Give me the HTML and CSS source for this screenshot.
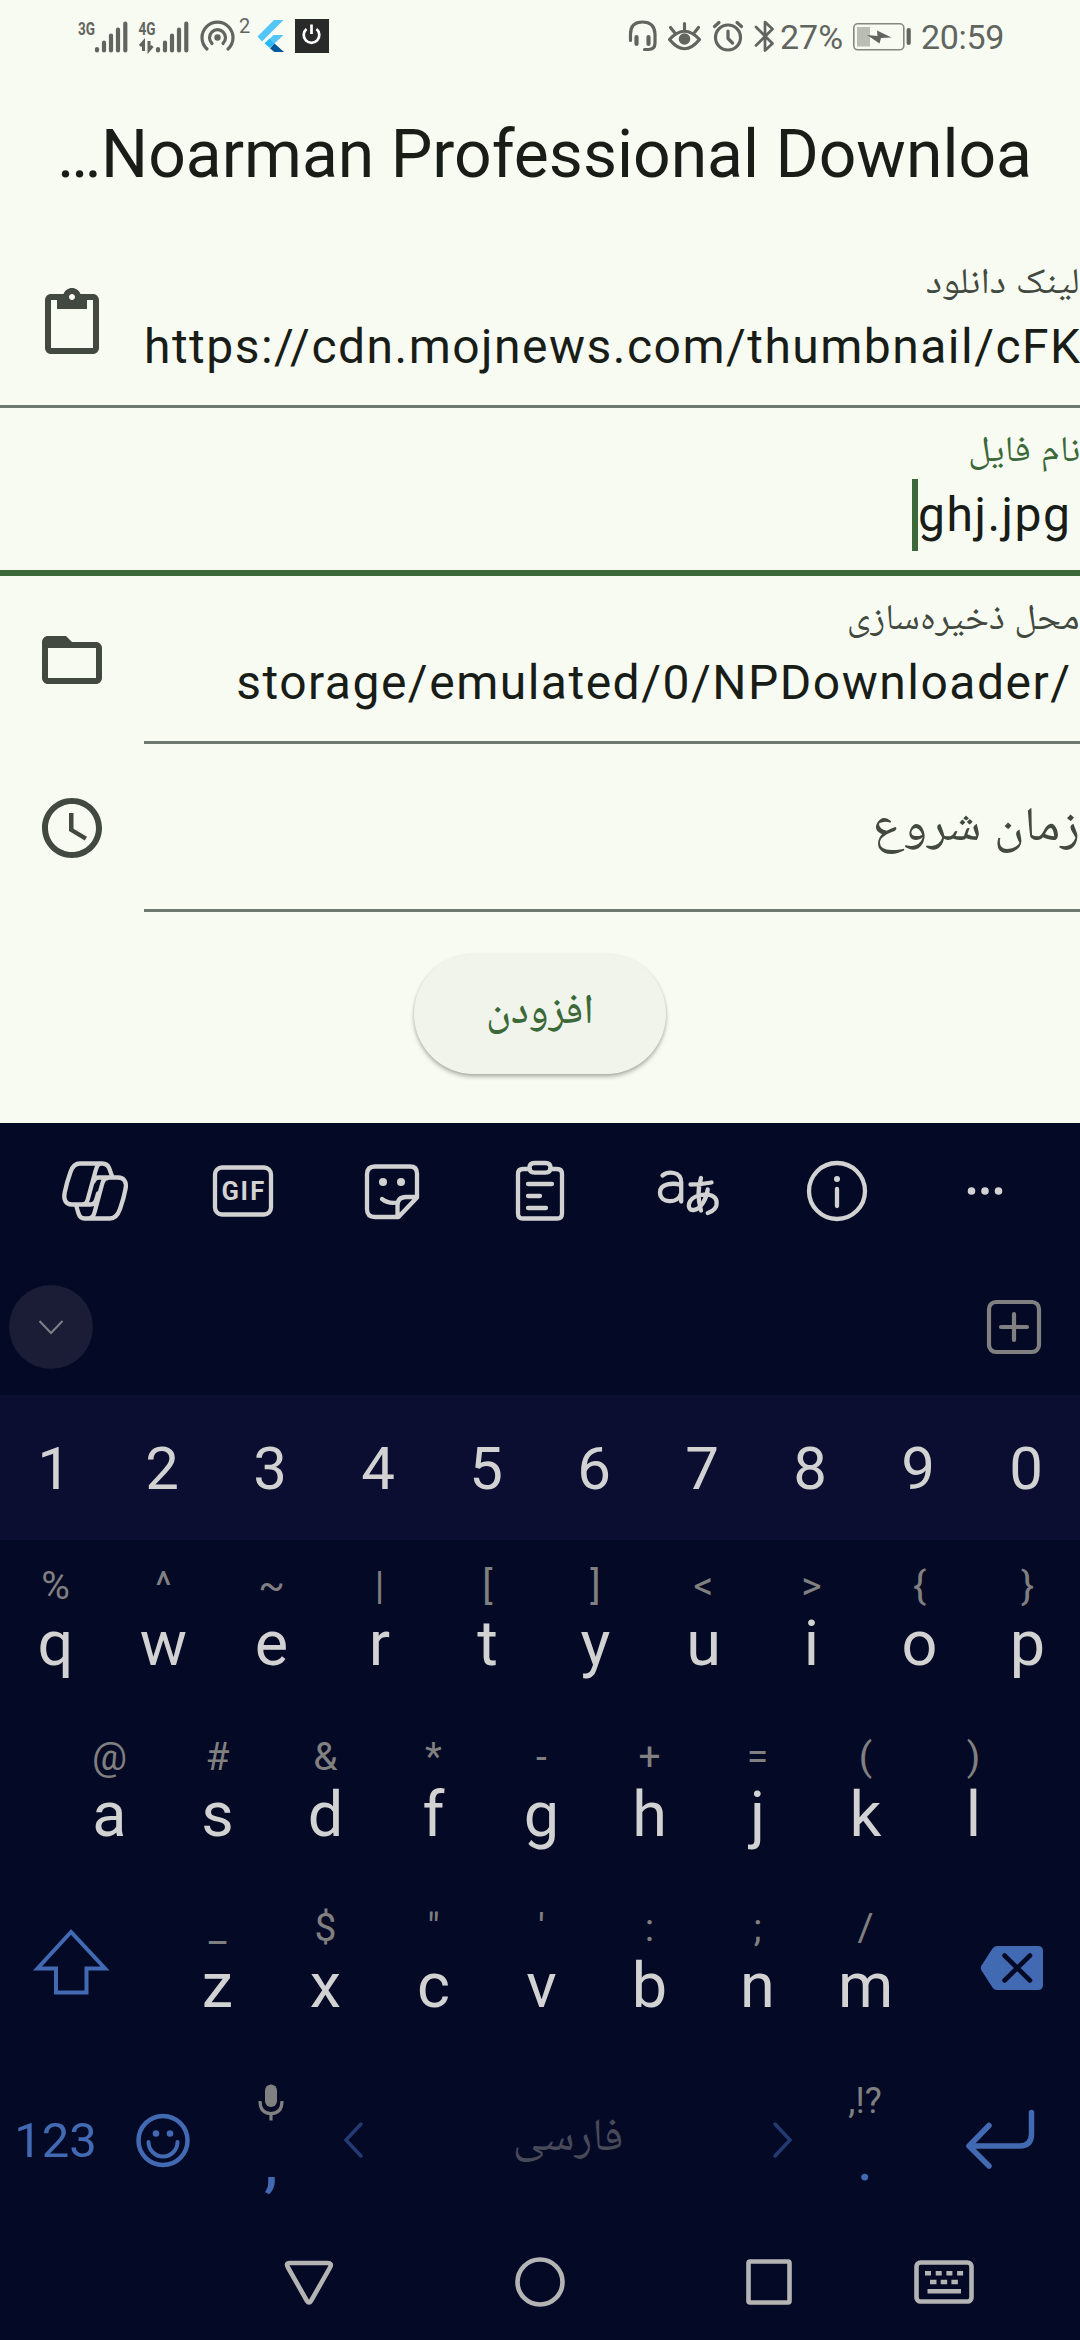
FILE: index.html
```html
<!DOCTYPE html>
<html lang="fa">
<head>
<meta charset="utf-8">
<title>Noarman Professional Downloader</title>
<link rel="stylesheet" href="styles.css">
</head>
<body>
<div class="screen">
  <header class="status">
    <svg width="60" height="72" viewBox="76 0 60 72" class="st"><text x="78" y="34.500" class="net" textLength="17" lengthAdjust="spacingAndGlyphs">3G</text><path d="M97 49v1.500M104 42.500v8M111 35.500v15M118 29.500v21M125.300 23.500v27" class="bar"/></svg>
    <svg width="62" height="72" viewBox="136 0 62 72" class="st"><text x="138.500" y="34.500" class="net" textLength="17" lengthAdjust="spacingAndGlyphs">4G</text><path d="M158 49v1.500M165 42.500v8M172 35.500v15M179 29.500v21M186.300 23.500v27" class="bar"/><path d="M143.500 51V42l-3.500 4M149 41v9l3.500-4" class="arr"/></svg>
    <svg width="41" height="72" viewBox="198 0 41 72" class="st"><circle cx="217.500" cy="37.500" r="3.200" class="f"/><path d="M212 43.500a8 8 0 1 1 11 0M207 49a15.500 15.500 0 1 1 21 0" class="l"/></svg>
    <span class="sup">2</span>
    <svg width="38" height="72" viewBox="254 0 38 72"><path d="M274 20h9.500L262 41.500l-4.500-5z" fill="#54c5f8"/><path d="M273.500 35h10L274.500 43.500l-5-4.500z" fill="#54c5f8"/><path d="M264.500 43.500l5-5 5 5-4.500 4.500z" fill="#29b6f6"/><path d="M270 48.500l4.500-5L284 52h-9.500z" fill="#01579b"/></svg>
    <svg width="40" height="72" viewBox="292 0 40 72"><rect x="295" y="19" width="34" height="34" fill="#292929"/><path d="M306.500 29a7.800 7.800 0 1 0 10 0M311.500 24.500V34" fill="none" stroke="#fff" stroke-width="2.700"/></svg>
    <span class="grow"></span>
    <svg width="37" height="72" viewBox="625 0 37 72" class="st"><path d="M630.500 40.500V34q0-12 12-12t12.500 12v9q0 6.500-6.500 6.500h-4" class="l"/><path d="M636.500 37v7M648.500 37v7" class="l w4"/></svg>
    <svg width="45" height="72" viewBox="662 0 45 72" class="st"><path d="M669.500 39.500Q684.500 23 699.500 39.500Q684.500 58 669.500 39.500zM684.500 23.500v6M670.500 27.500l4 5M698.500 27.500l-4 5" class="l"/><circle cx="684.500" cy="39" r="5.800" class="f"/></svg>
    <svg width="43" height="72" viewBox="707 0 43 72" class="st"><circle cx="728" cy="37.500" r="12.500" class="l"/><path d="M728 31v7.500l4.500 4.500M714.500 26.500l4.500-4M741.500 26.500l-4.500-4" class="l"/></svg>
    <svg width="30" height="72" viewBox="750 0 30 72" class="st"><path d="M756 27l16.500 16.500-7.500 7V22l7.500 7L756 45.500" class="l w25"/></svg>
    <span class="num pct">27%</span>
    <svg width="77" height="72" viewBox="843 0 77 72" class="st"><rect x="852.800" y="23.800" width="50" height="26" rx="4" class="thin"/><rect x="856" y="27" width="13" height="19.500" class="charge"/><path d="M866 35l10.500 1-.500-5.500 14.500 7-10.500.500-1.500 5.500z" class="f"/><path d="M907.700 30v13" class="bar"/></svg>
    <span class="num time">20:59</span>
  </header>

  <div class="title" dir="rtl"><span dir="ltr">…Noarman Professional Downloa</span></div>

  <form class="form">
    <div class="field line">
      <svg class="lead clip" viewBox="0 0 24 24"><path d="M19 3h-4.180C14.400 1.840 13.300 1 12 1s-2.400.840-2.820 2H5c-1.100 0-2 .9-2 2v16c0 1.100.9 2 2 2h14c1.100 0 2-.9 2-2V5c0-1.100-.9-2-2-2zm-7 0c.550 0 1 .450 1 1s-.450 1-1 1-1-.450-1-1 .450-1 1-1zm7 18H5V5h2v3h10V5h2v16z"/></svg>
      <div class="body"><label class="label" dir="rtl">لینک دانلود</label><div class="value start" dir="ltr">https://cdn.mojnews.com/thumbnail/cFK</div></div>
    </div>
    <div class="field focus">
      <div class="body"><label class="label" dir="rtl">نام فایل</label><div class="value" dir="ltr"><i class="caret"></i>ghj.jpg</div></div>
    </div>
    <div class="field">
      <svg class="lead" viewBox="0 0 24 24"><path d="M9.170 6l2 2H20v10H4V6h5.170M10 4H4c-1.100 0-1.990.9-1.990 2L2 18c0 1.100.9 2 2 2h16c1.100 0 2-.9 2-2V8c0-1.100-.9-2-2-2h-8l-2-2z"/><path d="M3 5h7l2 3H3z"/></svg>
      <div class="body line"><label class="label long" dir="rtl">محل ذخیره‌سازی</label><div class="value" dir="ltr">storage/emulated/0/NPDownloader/</div></div>
    </div>
    <div class="field">
      <svg class="lead" viewBox="0 0 24 24"><path d="M11.990 2C6.470 2 2 6.480 2 12s4.470 10 9.990 10C17.520 22 22 17.520 22 12S17.520 2 11.990 2zM12 20c-4.420 0-8-3.580-8-8s3.580-8 8-8 8 3.580 8 8-3.580 8-8 8z"/><path d="M12.500 7H11v6l5.250 3.150.750-1.230-4.500-2.670z"/></svg>
      <div class="body line"><label class="hintlabel" dir="rtl">زمان شروع</label></div>
    </div>
    <button type="button" class="add"><span>افزودن</span></button>
  </form>

  <section class="keyboard">
    <div class="tools">
      <svg viewBox="59 1155 72 72"><path d="M80 1163.500h22c4 0 6 1.500 7.300 5l3.200 9M80 1163.500c-5 0-8 4-9.500 8.500-2.500 7-4.500 14-5.800 20.500-1.500 7 1 12 7 12H82c4 0 5-2 6-6l7.500-27.500c1.500-5 2.500-7.500 6-7.500M91 1204.500c-3.500 0-3.500 0-8 0M88 1204.500h2.500c3.500 0 5-2 6-6l1.500-5M93.500 1181.500c1-3 2.500-4 5-4H118c6 0 9 4.500 7.500 11.500-1.200 6.500-3 13-5.500 20-1.800 5-4.500 9.500-10 9.500H84.500c-3.500 0-5-2-6-5l-2.500-8.500M88 1218.500c4 0 5.500-2 6.500-6l7.500-28c1-4.500 2.500-6.500 6-6.500"/></svg>
      <svg viewBox="207 1155 72 72"><rect x="215" y="1167.500" width="56" height="47" rx="7"/><text x="221.500 240.600 250.300" y="1200" class="gif">GIF</text></svg>
      <svg viewBox="356 1155 72 72"><path d="M375 1166.500h35q7 0 7 7v24l-18.500 19.500H375q-8 0-8-8v-34.500q0-8 8-8zM417 1197h-11q-8.500 0-8.500 8.500v11M382 1199q6.500 5 15 3.500"/><g class="f"><circle cx="383" cy="1182" r="4"/><circle cx="401" cy="1182" r="4"/></g></svg>
      <svg viewBox="504 1155 72 72"><path d="M530 1169h-7q-5 0-5 5v39.500q0 5 5 5h34q5 0 5-5V1174q0-5-5-5h-7M534.500 1163h11q5 0 5 4.800t-5 4.800h-11q-5 0-5-4.800t5-4.800zM528 1184h24M528 1196h12M528 1208h18"/></svg>
      <svg viewBox="652 1155 72 72"><path d="M662.500 1175.500c5-4 18.700-5 18.700 7v19M681 1185c-8-2.500-21-1.500-21 7.500 0 11 18 11.500 21 1M690.500 1184.500q11 0 21-2M701 1178q-5 16 0 32.500M707.700 1189.500c-1 9-7 20-14 20.500-5 .4-6-4.500-3.500-9 4-7 24-10 26.300 0 1 6-3 10.500-8.800 12"/></svg>
      <svg viewBox="801 1155 72 72"><circle cx="837" cy="1191" r="28"/><path d="M837 1189v17"/><circle cx="837" cy="1179" r="3" class="f"/></svg>
      <svg viewBox="949 1155 72 72"><g class="f"><circle cx="971.500" cy="1191" r="3.800"/><circle cx="985" cy="1191" r="3.800"/><circle cx="998.500" cy="1191" r="3.800"/></g></svg>
    </div>
    <div class="suggest">
      <span class="round"><svg width="30" height="20" viewBox="0 0 30 20"><path d="M3.500 4L15 16 26.500 4" fill="none" stroke="#7f7f86" stroke-width="2"/></svg></span>
      <svg width="60" height="60" viewBox="0 0 60 60" class="plus"><rect x="5" y="5" width="50" height="50" rx="7"/><path d="M30 17v26M17 30h26"/></svg>
    </div>
    <div class="digits"><b>1</b><b>2</b><b>3</b><b>4</b><b>5</b><b>6</b><b>7</b><b>8</b><b>9</b><b>0</b></div>
    <div class="keys"><span class="key"><i>%</i><b>q</b></span><span class="key"><i>^</i><b>w</b></span><span class="key"><i>~</i><b>e</b></span><span class="key"><i>|</i><b>r</b></span><span class="key"><i>[</i><b>t</b></span><span class="key"><i>]</i><b>y</b></span><span class="key"><i>&lt;</i><b>u</b></span><span class="key"><i>&gt;</i><b>i</b></span><span class="key"><i>{</i><b>o</b></span><span class="key"><i>}</i><b>p</b></span></div>
    <div class="keys"><span class="key"><i>@</i><b>a</b></span><span class="key"><i>#</i><b>s</b></span><span class="key"><i>&amp;</i><b>d</b></span><span class="key"><i>*</i><b>f</b></span><span class="key"><i>-</i><b>g</b></span><span class="key"><i>+</i><b>h</b></span><span class="key"><i>=</i><b>j</b></span><span class="key"><i>(</i><b>k</b></span><span class="key"><i>)</i><b>l</b></span></div>
    <div class="keys">
      <svg width="162" height="171" viewBox="0 1882 162 171" class="blue"><path d="M71 1932L37.500 1968.500H56v24h30.500v-24H105z"/></svg>
      <span class="key"><i>_</i><b>z</b></span><span class="key"><i>$</i><b>x</b></span><span class="key"><i>"</i><b>c</b></span><span class="key"><i>'</i><b>v</b></span><span class="key"><i>:</i><b>b</b></span><span class="key"><i>;</i><b>n</b></span><span class="key"><i>/</i><b>m</b></span>
      <svg width="162" height="171" viewBox="918 1882 162 171"><path d="M997 1946h41q5 0 5 5v34q0 5-5 5h-41q-3 0-4.500-2.500l-11-17q-1.500-2.500 0-5l11-17q1.500-2.500 4.500-2.500z" fill="#426ab3"/><path d="M1004.500 1955.500l25.500 25M1030 1955.500l-25.500 25" stroke="#040925" stroke-width="4.600" stroke-linecap="round"/></svg>
    </div>
    <div class="bottom">
      <span class="mode">123</span>
      <svg width="108" height="173" viewBox="108 2053 108 173" class="blue"><circle cx="163" cy="2140.500" r="24.500" stroke-width="4.500"/><path d="M148.500 2142a14.500 14.500 0 0 0 29 0" stroke-width="4" stroke-linecap="round"/><circle cx="156" cy="2133.500" r="3.300" class="fb"/><circle cx="170" cy="2133.500" r="3.300" class="fb"/></svg>
      <span class="punct comma"><svg width="36" height="56" viewBox="253 2072 36 56"><rect x="265" y="2083.500" width="12" height="22.500" rx="6" fill="#808080"/><path d="M260 2100q0 12.500 11 12.500t11-12.500M271 2112.500v7" fill="none" stroke="#808080" stroke-width="3.200"/></svg><b>,</b></span>
      <span class="space"><svg width="22" height="40" viewBox="0 0 22 40"><path d="M19 4L4 20l15 16"/></svg><em>فارسی</em><svg width="22" height="40" viewBox="0 0 22 40"><path d="M3 4l15 16L3 36"/></svg></span>
      <span class="punct"><i>,!?</i><b>.</b></span>
      <svg width="162" height="173" viewBox="918 2053 162 173" class="blue"><path d="M1031.500 2112.500V2134q0 12-12 12H970M989 2125.500l-20 20.500 20 20" stroke-width="5.500" stroke-linecap="round" stroke-linejoin="round"/></svg>
    </div>
    <nav class="nav">
      <svg width="231" height="114" viewBox="194 2226 231 114"><path d="M289.500 2263h38q5 0 2.500 4.500l-19 33.500q-2 3-4 0l-19-33.500q-2.500-4.500 1.500-4.500z"/></svg>
      <svg width="230" height="114" viewBox="425 2226 230 114"><circle cx="540" cy="2282" r="22.500"/></svg>
      <svg width="228" height="114" viewBox="655 2226 228 114"><rect x="748.500" y="2261.500" width="41" height="41" rx="1.500"/></svg>
      <svg width="122" height="114" viewBox="883 2226 122 114"><rect x="916.500" y="2262.500" width="55" height="39" rx="4"/><path d="M925 2273.300h38.500" stroke-dasharray="6 4.700"/><path d="M930 2282h29" stroke-dasharray="6.500 4.200"/><path d="M927.500 2291.300h33.500"/></svg>
    </nav>
  </section>
</div>
</body>
</html>
```
FILE: styles.css
```css
* { box-sizing: border-box; }
body { margin: 0; background: #f8fbf2; font-family: Roboto, "Noto Naskh Arabic", "Noto Sans Arabic", "DejaVu Sans", sans-serif; }
svg { display: block; flex: none; }
i, em { font-style: normal; }
b { font-weight: 400; }
.screen { width: 1080px; height: 2340px; overflow: hidden; display: flex; flex-direction: column; background: #f8fbf2; }

.status { height: 72px; padding: 0 75px 0 76px; display: flex; color: #62655f; white-space: nowrap; }
.st { fill: none; stroke: #62655f; }
.st .net { fill: #62655f; stroke: none; font: 700 19px Roboto, sans-serif; }
.st .bar { stroke-width: 4.200; stroke-linecap: round; }
.st .arr { stroke-width: 3; }
.st .l { stroke-width: 3.200; stroke-linecap: round; stroke-linejoin: round; }
.st .w4 { stroke-width: 4.200; }
.st .w25 { stroke-width: 2.700; }
.st .thin { stroke-width: 1.600; stroke: #84877f; }
.st .charge { fill: #b9bdb4; stroke: none; }
.st .f { fill: #62655f; stroke: none; }
.sup { width: 15px; font-size: 20px; line-height: 53px; }
.grow { flex: 1; }
.num { font-size: 34px; line-height: 75px; }
.pct { width: 64px; }
.time { width: 84px; letter-spacing: -.3px; }

.title { height: 168px; padding: 0 48px; font-size: 66px; line-height: 165px; color: #191d18; white-space: nowrap; }

.form { height: 883px; flex: none; display: flex; flex-direction: column; }
.field { height: 168px; flex: none; display: flex; }
.line { border-bottom: 3px solid #707970; }
.focus { border-bottom: 6px solid #3b6939; }
.lead { width: 72px; height: 72px; margin: 48px 36px 0; fill: #424940; }
.clip { margin-top: 45px; }
.body { flex: 1; min-width: 0; display: flex; flex-direction: column; align-items: flex-end; }
.label { height: 71px; font-size: 36px; line-height: 82px; color: #424940; white-space: nowrap; transform: scaleX(1.087); transform-origin: right; }
.label.long { transform: scaleX(1.06); }
.focus .label { color: #3b6939; }
.value { width: 100%; height: 72px; display: flex; justify-content: flex-end; padding-right: 8.500px; font-size: 48px; line-height: 72px; letter-spacing: 1.500px; color: #191d18; white-space: nowrap; }
.value.start { justify-content: flex-start; padding: 0; letter-spacing: 1.480px; }
.caret { width: 6px; height: 72px; background: #3b6939; }
.hintlabel { font-size: 48px; line-height: 160px; color: #424940; transform: scaleX(1.065); transform-origin: right; }
.add { align-self: center; width: 252px; height: 120px; margin-top: 42px; border: 0; border-radius: 60px; background: #f1f4eb; box-shadow: 0 3px 4px rgba(0,0,0,.25), 0 1px 3px rgba(0,0,0,.1); color: #3b6939; font: 500 42px Roboto, "Noto Naskh Arabic", "DejaVu Sans", sans-serif; }

.keyboard { flex: 1; background: #040925; color: #d2d2d2; display: flex; flex-direction: column; }
.tools { height: 136px; padding: 0 21px; display: flex; justify-content: space-around; align-items: center; }
.tools svg { width: 72px; height: 72px; fill: none; stroke: #d2d2d2; stroke-width: 4.300; stroke-linecap: round; stroke-linejoin: round; }
.tools .f { fill: #d2d2d2; stroke: none; }
.tools .gif { fill: #d2d2d2; stroke: none; font: 700 25.500px Roboto, sans-serif; }
.suggest { height: 136px; padding: 0 36px 0 9px; display: flex; justify-content: space-between; align-items: center; }
.round { width: 84px; height: 84px; border-radius: 50%; background: #1b1c36; display: flex; align-items: center; justify-content: center; }
.plus { fill: none; stroke: #808080; stroke-width: 4.200; stroke-linecap: round; }
.digits { height: 145px; display: flex; background: #0b0d31; font-size: 60px; line-height: 147px; }
.digits b { width: 108px; flex: none; text-align: center; }
.keys { height: 171px; display: flex; justify-content: center; }
.key { width: 108px; padding: 18px 0 0 3px; text-align: center; }
.key i { display: block; font-size: 39px; line-height: 56px; color: #808080; }
.key b { display: block; font-size: 63px; line-height: 60px; }
.blue { fill: none; stroke: #426ab3; stroke-width: 4; }
.fb { fill: #426ab3; stroke: none; }
.bottom { height: 173px; display: flex; color: #426ab3; }
.mode { width: 108px; padding-left: 3px; text-align: center; font-size: 49px; line-height: 175px; }
.punct { width: 108px; padding: 20px 0 0 2px; display: flex; flex-direction: column; align-items: center; }
.punct i { height: 56px; font-size: 36px; line-height: 56px; color: #808080; }
.punct b { font-size: 63px; line-height: 60px; }
.comma b { font-weight: 500; line-height: 68px; }
.space { width: 486px; padding: 0 16px 0 18px; display: flex; justify-content: space-between; align-items: center; }
.space svg { fill: none; stroke: #233b74; stroke-width: 3.500; stroke-linecap: round; }
.space em { font-size: 46px; color: #484a5a; }
.nav { flex: 1; padding-left: 194px; display: flex; }
.nav svg { fill: none; stroke: #b4b4b4; stroke-width: 4.600; }
```
